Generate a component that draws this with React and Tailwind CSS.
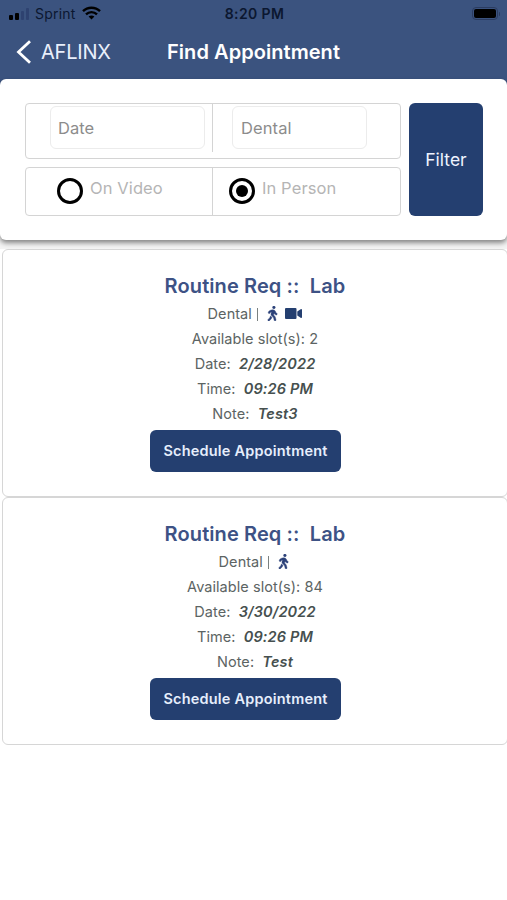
import React, { useState } from 'react';
import { FaWalking } from 'react-icons/fa';

const appointments = [
  { id: 1, title: 'Routine Req ::\u00a0 Lab', type: 'Dental', video: true, slots: 2, date: '2/28/2022', time: '09:26 PM', note: 'Test3' },
  { id: 2, title: 'Routine Req ::\u00a0 Lab', type: 'Dental', video: false, slots: 84, date: '3/30/2022', time: '09:26 PM', note: 'Test' },
];

const StatusBar = () => (
  <div className="flex h-[27px] items-center justify-between pl-[9px] pr-[7px] text-[#0b1730]">
    <div className="flex w-[180px] items-center">
      <div className="mt-[1px] flex h-[11px] items-end gap-[2px]">
        <span className="h-[5px] w-[4px] rounded-[1px] bg-black" />
        <span className="h-[7px] w-[4px] rounded-[1px] bg-black" />
        <span className="h-[9px] w-[3px] rounded-[1px] bg-[#2e4270]" />
        <span className="h-[12px] w-[3px] rounded-[1px] bg-[#2e4270]" />
      </div>
      <span className="ml-[6px] text-[14px] tracking-[0.2px]">Sprint</span>
      <svg className="ml-[6px] -mt-[2px]" width="19" height="14" viewBox="0 0 19 14" fill="none" stroke="black" strokeWidth="2.4">
        <path d="M1 5.2C5.6 0.6 13.4 0.6 18 5.2" />
        <path d="M4 8.4C7.1 5.4 11.9 5.4 15 8.4" />
        <path d="M9.5 13.6L6.6 10.6C8.3 9.2 10.7 9.2 12.4 10.6Z" fill="black" stroke="none" />
      </svg>
    </div>
    <span className="text-[14px] font-semibold tracking-[0.4px]">8:20 PM</span>
    <div className="flex w-[180px] items-center justify-end">
      <div className="flex h-[13px] w-[26px] items-center rounded-[4px] border border-[#2b3c61] p-[1px]">
        <span className="h-full w-full rounded-[2px] bg-black" />
      </div>
      <span className="ml-[1px] h-[4px] w-[1.5px] rounded-r bg-[#2b3c61]" />
    </div>
  </div>
);

const Header = () => (
  <div className="grid h-[52px] grid-cols-[1fr_auto_1fr] items-center pb-[2px] text-[20px] text-white">
    <button className="flex items-center pl-[16px] text-[20px] text-[#e9effb]">
      <svg width="15" height="24" viewBox="0 0 15 24" fill="none" stroke="white" strokeWidth="2.8">
        <path d="M14 1.2L2.5 12L14 22.8" />
      </svg>
      <span className="ml-[10px] tracking-[-0.2px]">AFLINX</span>
    </button>
    <h1 className="font-semibold tracking-[0.06px]">Find Appointment</h1>
    <span />
  </div>
);

const Radio = ({ checked, label, onClick }) => (
  <button onClick={onClick} className="flex items-start pt-[8px] text-left">
    <span className="mt-[2px] flex h-[26px] w-[26px] items-center justify-center rounded-full border-[3px] border-black">
      {checked && <span className="h-[12px] w-[12px] rounded-full bg-black" />}
    </span>
    <span className="ml-[7px] text-[16.5px] leading-[24px] tracking-[0.1px] text-[#b5b5b5]">{label}</span>
  </button>
);

const FilterPanel = () => {
  const [mode, setMode] = useState('person');

  return (
    <div className="relative flex h-[161px] gap-[8px] rounded-[6px] bg-white pl-[25px] pt-[24px] shadow-[0_3px_5px_rgba(0,0,0,0.45)]">
      <div className="flex w-[376px] flex-col gap-[8px]">
        <div className="flex h-[56px] rounded-[4px] border-[1.5px] border-[#d4d4d4]">
          <div className="h-[48px] w-[187px] border-r-[1.5px] border-[#d4d4d4] pl-[24px] pt-[2px]">
            <div className="h-[43px] w-[155px] rounded-[6px] border border-[#ececec] pl-[7px] text-[16.5px] leading-[43px] text-[#8c8c8c]">Date</div>
          </div>
          <div className="pl-[19px] pt-[2px]">
            <div className="h-[43px] w-[135px] rounded-[6px] border border-[#ececec] pl-[8px] text-[16.5px] leading-[43px] tracking-[0.1px] text-[#8c8c8c]">Dental</div>
          </div>
        </div>
        <div className="flex h-[49px] rounded-[4px] border-[1.5px] border-[#d4d4d4]">
          <div className="w-[187px] border-r-[1.5px] border-[#d4d4d4] pl-[31px]">
            <Radio label="On Video" checked={mode === 'video'} onClick={() => setMode('video')} />
          </div>
          <div className="pl-[16px]">
            <Radio label="In Person" checked={mode === 'person'} onClick={() => setMode('person')} />
          </div>
        </div>
      </div>
      <button className="h-[113px] w-[74px] rounded-[6px] bg-[#243f70] pt-[2px] text-[17.5px] text-[#eef3ff]">Filter</button>
    </div>
  );
};

const VideoIcon = () => (
  <svg className="ml-[5px]" width="17" height="11" viewBox="0 0 17 11" fill="#243f70">
    <rect width="11.5" height="11" rx="1" />
    <path d="M12.3 3.6L15.6 1.2Q17 0.6 17 2V9Q17 10.4 15.6 9.8L12.3 7.4Z" />
  </svg>
);

const Row = ({ label, value }) => (
  <p>
    {label}:&nbsp; <span className="font-semibold italic tracking-[0.15px] text-[#46504f]">{value}</span>
  </p>
);

const AppointmentCard = ({ item }) => (
  <div className="ml-[2px] flex h-[248px] flex-col items-center rounded-[6px] border-[1.5px] border-[#d6d6d6] bg-white pt-[23px] text-[14.5px] leading-[25px] tracking-[0.05px] text-[#5c6463]">
    <h2 className="mb-[1px] text-[20px] font-semibold leading-[27px] tracking-[0.1px] text-[#3d5285]">{item.title}</h2>
    <div className="flex h-[25px] items-center">
      <span>{item.type}</span>
      <span className="ml-[5px] mt-[1px] h-[13px] w-[1.5px] bg-[#7a8180]" />
      <FaWalking className="ml-[7px] text-[15px] text-[#2c4179]" stroke="#2c4179" strokeWidth="14" />
      {item.video && <VideoIcon />}
    </div>
    <p>Available slot(s): {item.slots}</p>
    <Row label="Date" value={item.date} />
    <Row label="Time" value={item.time} />
    <Row label="Note" value={item.note} />
    <button className="mr-[19px] mt-[4px] h-[42px] w-[191px] rounded-[6px] bg-[#243f70] pb-[2px] text-[14.5px] font-semibold tracking-[0.2px] text-[#e6eefc]">
      Schedule Appointment
    </button>
  </div>
);

const App = () => {
  return (
    <div className="h-[900px] w-[507px] overflow-hidden bg-white font-['Inter',sans-serif] [font-feature-settings:'calt'_0]">
      <div className="bg-[#3b537f]">
        <StatusBar />
        <Header />
      </div>
      <div className="bg-gradient-to-b from-[#3b537f] from-5% to-[#f4f4f4] to-5%">
        <FilterPanel />
        <div className="h-[9px]" />
      </div>
      <div className="-mr-[1px]">
        {appointments.map(item => (
          <AppointmentCard key={item.id} item={item} />
        ))}
      </div>
    </div>
  );
};

export default App;
